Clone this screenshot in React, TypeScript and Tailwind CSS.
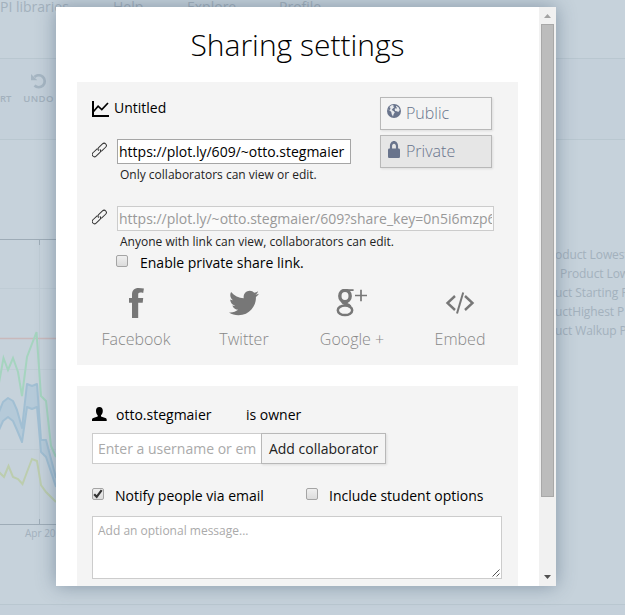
import React from "react";
import { FaTwitter, FaLock } from "react-icons/fa";

function ChartIcon() {
  return (
    <svg width="17" height="17" viewBox="0 0 17 17" fill="none" stroke="#000">
      <path d="M1 0v15h16" strokeWidth="2" />
      <path d="M1.5 10.500l4.600-5.300 3.700 3.400L16 2" strokeWidth="1.700" />
    </svg>
  );
}

function LinkIcon() {
  return (
    <svg width="16" height="16" viewBox="0 0 16 16" fill="none" stroke="#333" strokeWidth="1">
      <g transform="translate(-0.700 0) rotate(-43 8 8)">
        <path d="M7.500 5.700H1.500a2.300 2.300 0 0 0 0 4.600h5a2.300 2.300 0 0 0 2.300-2.300" />
        <path d="M8.500 10.300h6a2.300 2.300 0 0 0 0-4.600h-5A2.300 2.300 0 0 0 7.200 8" />
      </g>
    </svg>
  );
}

function GlobeIcon() {
  return (
    <svg width="14" height="14" viewBox="0 0 14 14">
      <circle cx="7" cy="7" r="7" fill="#69748c" />
      <path d="M2 3.2L4.500 1.200 6.700 1 6 2.300 7.500 3 5.800 4.600 4.700 6 6.500 7 7.800 8.200 6.600 10.200 6 12.400 4.700 10.300 4.300 8 2.800 6.500 1.400 6zM9 1.800l2.500 1.500 1.300 2.800-1.500 2-1.400-.8-1.700-.2-.6-2 1.400-1.200z" fill="#e9ebee" />
      <path d="M1.500 2.500l2 1.500L3 6 1 5.500zM8.200 2.800l1.800.7-.8 1.500z" fill="#69748c" />
    </svg>
  );
}

function FacebookIcon() {
  return (
    <svg width="15" height="30" viewBox="0 0 15 30" fill="#777">
      <path d="M3 30V14.700H0v-4.800h3V6.700C3 2.300 5.200 0 9.700 0c1.900 0 3.800.2 5.200.5L14.200 5c-1.100-.3-2-.4-2.800-.4-1.800 0-2.200.8-2.200 2.300v3h5l-.5 4.800H9.200V30z" />
    </svg>
  );
}

function GooglePlusIcon() {
  return (
    <svg width="32" height="28" viewBox="0 0 32 28" fill="none" stroke="#777">
      <ellipse cx="9" cy="7" rx="5.200" ry="5.700" strokeWidth="3.400" />
      <path d="M9 1.100h8.600" strokeWidth="1.800" />
      <path d="M7 12.500c-1.500 2.200 5.500 2.300 7 5" strokeWidth="3" />
      <ellipse cx="9" cy="21.300" rx="7.200" ry="4.800" strokeWidth="2.500" />
      <path d="M19 6.500h12M25 .7v11.600" strokeWidth="1.700" />
    </svg>
  );
}

function EmbedIcon() {
  return (
    <svg width="30" height="22" viewBox="0 0 30 22" fill="none" stroke="#777">
      <path d="M10 4L2.500 11 10 18M20 4l7.500 7L20 18" strokeWidth="2.400" />
      <path d="M18.200.5L12 21.500" strokeWidth="2" />
    </svg>
  );
}

function UserIcon() {
  return (
    <svg width="15" height="15" viewBox="0 0 15 15">
      <path d="M7.400 0C9.700 0 10.800 1.300 10.800 3.800 10.800 5.800 10 7.400 9 8.200v1.300l4.400 1.500c1 .4 1.300 1 1.300 1.800V14H0v-1.200c0-.8.4-1.400 1.300-1.800l4.400-1.500V8.200C4.700 7.400 4 5.800 4 3.800 4 1.300 5.100 0 7.400 0z" />
    </svg>
  );
}

function UndoIcon() {
  return (
    <svg width="16" height="15" viewBox="0 0 16 15" fill="none" stroke="#a6b6c3">
      <path d="M3.500 11.500A6 6 0 1 0 3.500 3" strokeWidth="2.700" />
      <path d="M0 0v6.300h6.300z" fill="#a6b6c3" stroke="none" />
    </svg>
  );
}

function CheckBox({ checked = false }: { checked?: boolean }) {
  return (
    <span className="flex size-3 shrink-0 items-center justify-center rounded-[2px] border border-[#a4a4a4] bg-linear-to-b from-[#efefef] to-[#dcdcdc]">
      {checked && (
        <svg width="10" height="10" viewBox="0 0 10 10" fill="none" stroke="#333" strokeWidth="2.200">
          <path d="M1.200 5.200L3.700 7.800 8.700 1.200" />
        </svg>
      )}
    </span>
  );
}

const legend = [
  { label: "oduct Lowest", pad: "pl-0" },
  { label: "Product Low", pad: "pl-[5px]" },
  { label: "uct Starting P", pad: "pl-0" },
  { label: "uctHighest P", pad: "pl-0" },
  { label: "uct Walkup P", pad: "pl-0" },
];

function Workspace() {
  return (
    <div className="flex h-full flex-col text-[#a3b1bd]">
      <header className="flex h-[59px] shrink-0 border-b border-[#b9c7d0] text-[14px] leading-[14px] whitespace-nowrap">
        <span className="w-[113px]">PI libraries</span>
        <span className="w-[74px]">Help</span>
        <span className="w-[92px]">Explore</span>
        <span>Profile</span>
      </header>
      <div className="flex h-[81px] shrink-0 border-b border-[#b9c7d0] bg-[#c4d0da] pt-[15px] text-[9.500px] font-semibold">
        <span className="w-[23px] pt-[18px] leading-[14px]">RT</span>
        <div className="flex w-[31px] flex-col items-center">
          <UndoIcon />
          <span className="mt-[3px] leading-[14px] tracking-[0.400px]">UNDO</span>
        </div>
      </div>
      <div className="flex h-[464px] shrink-0 justify-between">
        <svg width="70" height="464" viewBox="0 140 70 464" fill="none">
          <path d="M0 288.500h70M0 369.500h70M0 449.500h70M39.500 240v284" stroke="#bfccd5" />
          <path d="M0 338.500h70" stroke="#c9b9bb" strokeWidth="1.500" />
          <path d="M0 239.500h70M39.500 240v5M0 524.500h70M39.500 519v5" stroke="#9eacb7" />
          <path d="M-1 412L3 402 8 398 13 401 17 410 22 428 27 384 32 386 37 384 41 440H46L56 478V487L46 457 41 452 37 407 32 409 27 407 22 442 17 430 13 421 8 417 3 421-1 430z" fill="#b5cad9" />
          <path d="M-1 412L3 402 8 398 13 401 17 410 22 428 27 384 32 386 37 384 41 440H46L56 478M-1 430L3 421 8 417 13 421 17 430 22 442 27 407 32 409 37 407 41 452 46 457 56 487" stroke="#a1bfd3" strokeWidth="2" strokeLinejoin="round" />
          <path d="M-1 383L3.500 358L8 370L13 358L18 372L22 396L27 357L36.500 332L41 396L46 401L51 446L56 457" stroke="#a5d4bf" strokeWidth="2" />
          <path d="M-1 472L4 477L8.500 466L13 477L18 479L22.500 484L27 472L32 459L37 461L41 485L46 492L56 502" stroke="#bccdae" strokeWidth="2" />
          <text x="25" y="537" fill="#a3b1bd" fontSize="10" fontFamily="Open Sans">Apr 20</text>
        </svg>
        <div className="flex w-[70px] flex-col pt-[105px] text-[12px] leading-[19px] tracking-[-0.080px] whitespace-nowrap">
          {legend.map((l) => (
            <span key={l.label} className={l.pad}>{l.label}</span>
          ))}
        </div>
      </div>
      <div className="grow border-t border-[#b9c7d0] bg-[#c4d0da]" />
    </div>
  );
}

function LinkPanel() {
  return (
    <section className="flex h-[283px] shrink-0 flex-col bg-[#f4f4f4] pl-[15px]">
      <div className="flex h-[101px]">
        <div className="w-[288px]">
          <div className="mt-[14px] flex h-[22px] items-center">
            <span className="mt-[5px]"><ChartIcon /></span>
            <span className="ml-[5px] text-[14px]">Untitled</span>
          </div>
          <div className="mt-[21px] flex">
            <span className="mt-[3px]"><LinkIcon /></span>
            <div className="ml-[9px] h-[25px] w-[234px] border border-[#a5a5a5] bg-white pl-px text-[14px] leading-[24px]">https://plot.ly/609/~otto.stegmaier</div>
          </div>
          <p className="mt-[2px] ml-[28px] text-[12px] leading-[18px] text-[#222]">Only collaborators can view or edit.</p>
        </div>
        <div className="flex w-[112px] flex-col gap-[5px] pt-[15px] text-[16px] font-light text-[#69748c]">
          <div className="flex h-[33px] shrink-0 border border-[#b8b8b8] bg-[#f4f4f4] pl-[6px] leading-[31px] shadow-[1px_1px_2px_#ddd]">
            <span className="mt-[6px]"><GlobeIcon /></span>
            <span className="ml-[5px]">Public</span>
          </div>
          <div className="flex h-[33px] shrink-0 border border-[#b8b8b8] bg-[#e6e6e6] pl-[7px] leading-[31px] shadow-[1px_1px_2px_#ddd]">
            <FaLock className="mt-[5px] h-[17px] w-[12px]" preserveAspectRatio="none" />
            <span className="ml-[6px]">Private</span>
          </div>
        </div>
      </div>
      <div className="mt-[23px] flex">
        <span className="mt-[3px]"><LinkIcon /></span>
        <div className="ml-[9px] h-[25px] w-[377px] overflow-hidden border border-[#ccc] bg-[#fafafa] px-px text-[14px] leading-[24px] whitespace-nowrap text-[#999]">
          <div className="overflow-hidden">https://plot.ly/~otto.stegmaier/609?share_key=0n5i6mzp6</div>
        </div>
      </div>
      <p className="mt-[2px] ml-[28px] text-[12px] leading-[18px] text-[#222]">Anyone with link can view, collaborators can edit.</p>
      <div className="mt-[2px] ml-[24px] flex h-[20px] gap-3 text-[14px] leading-[20px]">
        <span className="mt-[2px]"><CheckBox /></span>
        <span>Enable private share link.</span>
      </div>
      <div className="mt-[12px] -ml-[10px] grid w-[432px] grid-cols-4 text-center">
        {[
          { name: "Facebook", icon: <FacebookIcon /> },
          { name: "Twitter", icon: <FaTwitter className="size-[30px] text-[#777]" /> },
          { name: "Google +", icon: <GooglePlusIcon /> },
          { name: "Embed", icon: <EmbedIcon /> },
        ].map((s) => (
          <div key={s.name} className="flex flex-col items-center">
            <div className="flex h-[35px] items-center">{s.icon}</div>
            <span className="mt-[8px] text-[16px] leading-[22px] font-light text-[#888]">{s.name}</span>
          </div>
        ))}
      </div>
    </section>
  );
}

function CollaboratorPanel() {
  return (
    <section className="mt-[21px] h-[200px] shrink-0 overflow-hidden bg-[#f4f4f4] pl-[15px]">
      <div className="mt-[18px] flex h-[22px] text-[14px] leading-[22px]">
        <span className="mt-[3px]"><UserIcon /></span>
        <span className="ml-[9px] w-[130px]">otto.stegmaier</span>
        <span>is owner</span>
      </div>
      <div className="mt-[7px] flex h-[31px] text-[14px] leading-[30px]">
        <div className="w-[169px] border border-r-0 border-[#ccc] bg-white pl-[5px] text-[#aaa]">Enter a username or em</div>
        <div className="w-[125px] border border-[#b8b8b8] bg-[#f4f4f4] text-center whitespace-nowrap text-[#222] shadow-[1px_1px_2px_#ddd]">Add collaborator</div>
      </div>
      <div className="mt-[22px] flex h-[20px] text-[14px] leading-[20px]">
        <span className="mt-[2px]"><CheckBox checked /></span>
        <span className="ml-[11px] w-[191px]">Notify people via email</span>
        <span className="mt-[2px]"><CheckBox /></span>
        <span className="ml-[11px]">Include student options</span>
      </div>
      <div className="mt-[10px] flex h-[63px] w-[410px] justify-between border border-[#ccc] bg-white pt-[5px] pl-[5px] text-[12px] leading-[18px] text-[#aaa]">
        <span>Add an optional message...</span>
        <svg className="mr-px mb-px self-end" width="8" height="8" viewBox="0 0 8 8" stroke="#555" fill="none">
          <path d="M.5 7.500l7-7M4.500 7.500l3-3" />
        </svg>
      </div>
    </section>
  );
}

export default function App() {
  return (
    <div className="relative h-[615px] w-[625px] overflow-hidden bg-[#c6d2db] font-['Open_Sans',sans-serif] text-black">
      <Workspace />
      <div className="absolute top-[7px] left-[56px] flex h-[579px] w-[500px] bg-white shadow-[0_0_18px_rgba(45,70,95,0.42)]">
        <main className="flex w-[483px] flex-col overflow-hidden pr-[21px] pl-[21px]">
          <h1 className="h-[75px] shrink-0 pt-[18px] text-center text-[30px] leading-[40px] font-light">Sharing settings</h1>
          <LinkPanel />
          <CollaboratorPanel />
        </main>
        <div className="flex w-[17px] flex-col items-center bg-[#f1f1f1]">
          <svg width="17" height="17" viewBox="0 0 17 17"><path d="M5 11l3.500-4 3.500 4z" fill="#a3a3a3" /></svg>
          <div className="h-[473px] w-[13px] border border-[#a8a8a8] bg-[#bcbcbc]" />
          <svg className="mt-auto" width="17" height="17" viewBox="0 0 17 17"><path d="M5 6l3.500 4L12 6z" fill="#505050" /></svg>
        </div>
      </div>
    </div>
  );
}
